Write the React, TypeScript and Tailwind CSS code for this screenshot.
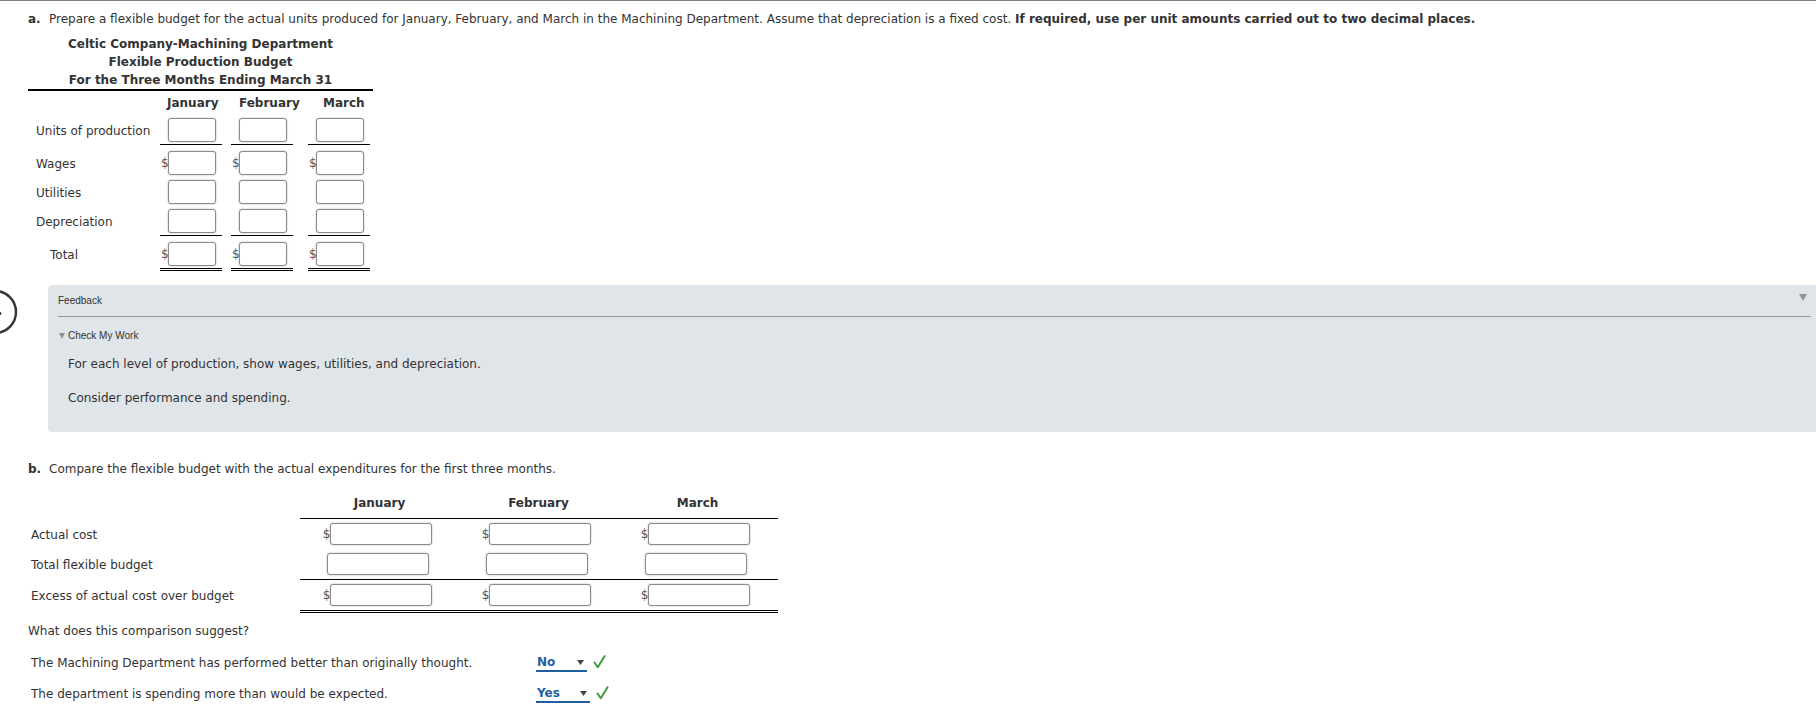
import React from "react";

const boxA = "h-[24px] w-[48px] rounded-[3px] border border-[#8a8a8a] bg-white shadow-[0_0_2px_rgba(0,0,0,0.3)]";
const boxB = "h-[22px] w-[102px] rounded-[3px] border border-[#8a8a8a] bg-white shadow-[0_0_2px_rgba(0,0,0,0.3)]";

type RowA = {
  label: string;
  dollar: boolean;
  indent?: boolean;
  rule?: "single" | "double";
  extraTop?: boolean;
};

const ROWS_A: RowA[] = [
  { label: "Units of production", dollar: false, rule: "single" },
  { label: "Wages", dollar: true, extraTop: true },
  { label: "Utilities", dollar: false },
  { label: "Depreciation", dollar: false, rule: "single" },
  { label: "Total", dollar: true, indent: true, extraTop: true, rule: "double" },
];

type RowB = { label: string; dollar: boolean; rule?: "single" | "double" };

const ROWS_B: RowB[] = [
  { label: "Actual cost", dollar: true },
  { label: "Total flexible budget", dollar: false, rule: "single" },
  { label: "Excess of actual cost over budget", dollar: true, rule: "double" },
];

function ruleClass(rule?: "single" | "double") {
  if (rule === "single") return "border-b border-black";
  if (rule === "double") return "border-b-[3px] border-double border-black";
  return "";
}

function Check() {
  return (
    <svg width="13" height="14" viewBox="0 0 13 14" className="ml-[6px] mb-[3px]">
      <path d="M1.5 7.5 L4.8 12.2 L11.5 1.2" fill="none" stroke="#3d9a3d" strokeWidth="2" strokeLinecap="round" strokeLinejoin="round" />
    </svg>
  );
}

function Pick({ value, width }: { value: string; width: string }) {
  return (
    <span className={`inline-flex h-[18px] ${width} items-center justify-between border-b-2 border-[#1f5f9e] pl-[1px] pr-[3px] font-bold leading-[16px] text-[#1f5f9e]`}>
      {value}
      <svg width="7" height="5" viewBox="0 0 7 5">
        <path d="M0 0 L7 0 L3.5 5 Z" fill="#444" />
      </svg>
    </span>
  );
}

export default function App() {
  return (
    <div className="relative h-[714px] w-[1816px] overflow-hidden border-t border-[#808080] bg-white font-['DejaVu_Sans',Verdana,sans-serif] text-[12px] text-[#333]">
      {/* side nav button, mostly off-screen */}
      <svg width="50" height="50" viewBox="0 0 50 50" className="absolute left-[-30px] top-[286px]">
        <circle cx="25" cy="25" r="21" fill="none" stroke="#333" strokeWidth="2.4" />
        <circle cx="29.5" cy="26.5" r="1.8" fill="#333" />
      </svg>

      {/* part a */}
      <div className="pl-[28px] pt-[9px] leading-[18px]">
        <span className="inline-block w-[21px] font-bold">a.</span>
        Prepare a flexible budget for the actual units produced for January, February, and March in the Machining Department. Assume that depreciation is a fixed cost.{" "}
        <span className="font-bold">If required, use per unit amounts carried out to two decimal places.</span>
      </div>

      <div className="ml-[28px] mt-[7px] w-[345px] border-b-2 border-black text-center font-bold leading-[18px]">
        <div>Celtic Company-Machining Department</div>
        <div>Flexible Production Budget</div>
        <div>For the Three Months Ending March 31</div>
      </div>

      <div className="ml-[28px]">
        <div className="flex h-[24px] items-center font-bold">
          <div className="w-[132px]" />
          <div className="w-[62px] pl-[7px]">January</div>
          <div className="ml-[9px] w-[62px] pl-[8px]">February</div>
          <div className="ml-[15px] w-[62px] pl-[15px]">March</div>
        </div>
        {ROWS_A.map((r) => (
          <div key={r.label} className={`flex ${r.extraTop ? "pt-[3px]" : ""}`}>
            <div className={`flex h-[29px] w-[132px] items-center ${r.indent ? "pl-[22px]" : "pl-[8px]"}`}>
              <span className="mt-[3px]">{r.label}</span>
            </div>
            {[0, 1, 2].map((i) => (
              <div key={i} className={`w-[62px] ${i === 1 ? "ml-[9px]" : ""} ${i === 2 ? "ml-[15px]" : ""} ${ruleClass(r.rule)}`}>
                <div className="flex h-[29px] items-center pl-[1px]">
                  <span className="inline-block w-[7px] text-[#555]">{r.dollar ? "$" : ""}</span>
                  <div className={boxA} />
                </div>
              </div>
            ))}
          </div>
        ))}
      </div>

      {/* feedback */}
      <div className="relative ml-[48px] mt-[14px] w-[1778px] rounded-[4px] bg-[#dfe5e9] pb-[25px] pl-[10px] pr-[15px] pt-[9px]">
        <svg width="8" height="7" viewBox="0 0 8 7" className="absolute right-[19px] top-[9px]">
          <path d="M0 0 L8 0 L4 7 Z" fill="#8a959b" />
        </svg>
        <div className="font-['Liberation_Sans',Arial,sans-serif] text-[10px] leading-[14px] text-[#333]">Feedback</div>
        <div className="mt-[8px] h-px bg-[#8d979c]" />
        <div className="mt-[12px] flex items-center font-['Liberation_Sans',Arial,sans-serif] text-[10px] leading-[14px]">
          <svg width="6" height="6" viewBox="0 0 6 6" className="ml-[1px] mr-[3px]">
            <path d="M0 0 L6 0 L3 6 Z" fill="#8a959b" />
          </svg>
          Check My Work
        </div>
        <div className="mt-[12px] pl-[10px] leading-[18px]">For each level of production, show wages, utilities, and depreciation.</div>
        <div className="mt-[16px] pl-[10px] leading-[18px]">Consider performance and spending.</div>
      </div>

      {/* part b */}
      <div className="mt-[28px] pl-[28px] leading-[18px]">
        <span className="inline-block w-[21px] font-bold">b.</span>
        Compare the flexible budget with the actual expenditures for the first three months.
      </div>

      <div className="ml-[28px] mt-[10px]">
        <div className="flex">
          <div className="w-[272px]" />
          <div className="flex w-[478px] border-b border-black font-bold">
            {["January", "February", "March"].map((m) => (
              <div key={m} className="flex h-[30px] w-[159px] items-center justify-center">{m}</div>
            ))}
          </div>
        </div>
        {ROWS_B.map((r) => (
          <div key={r.label} className="flex">
            <div className="flex h-[30px] w-[272px] items-center pl-[3px]">
              <span className="mt-[1px]">{r.label}</span>
            </div>
            <div className={`flex w-[478px] ${ruleClass(r.rule)}`}>
              {[0, 1, 2].map((i) => (
                <div key={i} className="flex h-[30px] w-[159px] items-center justify-center pr-[4px]">
                  {r.dollar && <span className="text-[#555]">$</span>}
                  <div className={boxB} />
                </div>
              ))}
            </div>
          </div>
        ))}
      </div>

      <div className="mt-[9px] pl-[28px] leading-[18px]">What does this comparison suggest?</div>

      <div className="mt-[14px] flex h-[18px] items-end pl-[31px]">
        <span className="w-[505px] leading-[18px]">The Machining Department has performed better than originally thought.</span>
        <Pick value="No" width="w-[51px]" />
        <Check />
      </div>
      <div className="mt-[13px] flex h-[18px] items-end pl-[31px]">
        <span className="w-[505px] leading-[18px]">The department is spending more than would be expected.</span>
        <Pick value="Yes" width="w-[54px]" />
        <Check />
      </div>
    </div>
  );
}
